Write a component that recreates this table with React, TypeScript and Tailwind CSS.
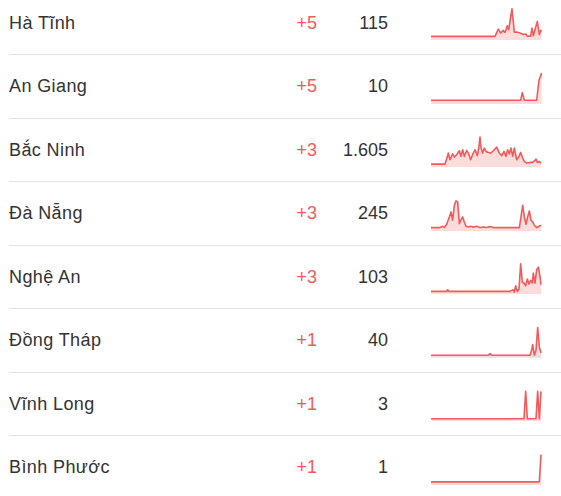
import React from "react";

type Raw = [number, number][];

const conv = (raw: Raw, ox: number, oy: number, top: number): [number, number][] =>
  raw.map(([X, Y]) => [X / 3 + ox - 431, Y / 3 + oy - top]);

const rowTop = (i: number) => -8.5 + 63.5 * i + 17.75;

const charts: [number, number][][] = [
  conv(
    [
      [33, 110], [225, 110], [235, 88], [242, 100], [250, 92], [255, 98], [262, 78], [266, 90],
      [276, 27], [283, 97], [290, 97], [300, 100], [310, 104], [318, 103], [322, 109], [332, 109],
      [336, 85], [340, 108], [345, 90], [352, 65], [358, 105], [362, 92], [365, 95],
    ],
    420, 0, rowTop(0)
  ),
  conv(
    [[453, 300], [722, 300], [727, 277], [733, 300], [770, 300], [777, 240], [785, 218]],
    280, 0, rowTop(1)
  ),
  conv(
    [
      [93, 133], [135, 133], [140, 118], [145, 100], [150, 120], [158, 102], [163, 112], [170, 105],
      [178, 93], [183, 110], [188, 90], [193, 110], [200, 92], [205, 100], [212, 120], [218, 104],
      [225, 90], [232, 108], [237, 80], [240, 52], [243, 85], [248, 100], [253, 85], [258, 95],
      [265, 98], [272, 100], [280, 93], [290, 82], [298, 100], [305, 108], [312, 95], [318, 110],
      [323, 90], [328, 103], [333, 85], [338, 110], [343, 85], [350, 120], [357, 110], [362, 98],
      [368, 115], [373, 125], [380, 130], [390, 128], [398, 128], [405, 122], [408, 118],
      [412, 128], [418, 125], [423, 130],
    ],
    400, 120, rowTop(2)
  ),
  conv(
    [
      [93, 322], [120, 322], [128, 318], [133, 322], [140, 312], [148, 290], [153, 275], [158, 300],
      [163, 255], [168, 242], [173, 245], [178, 310], [183, 298], [188, 290], [193, 305], [198, 318],
      [205, 320], [212, 318], [220, 321], [230, 318], [240, 322], [250, 320], [260, 322], [270, 319],
      [280, 322], [290, 322], [358, 322], [363, 290], [368, 255], [373, 290], [378, 312], [383, 290],
      [388, 272], [393, 300], [398, 305], [403, 315], [410, 322], [418, 318], [423, 315],
    ],
    400, 120, rowTop(3)
  ),
  conv(
    [
      [93, 125], [140, 125], [143, 120], [147, 125], [330, 125], [335, 122], [340, 120], [343, 127],
      [347, 108], [352, 125], [357, 118], [362, 42], [367, 98], [372, 100], [377, 108], [382, 88],
      [387, 103], [392, 92], [397, 100], [400, 70], [405, 100], [410, 60], [415, 52], [420, 80],
      [423, 105],
    ],
    400, 250, rowTop(4)
  ),
  conv(
    [
      [93, 315], [265, 315], [270, 310], [275, 315], [390, 315], [395, 300], [398, 283], [403, 315],
      [408, 300], [413, 232], [418, 290], [423, 308],
    ],
    400, 250, rowTop(5)
  ),
  conv(
    [[93, 147], [372, 147], [377, 65], [382, 147], [408, 147], [413, 65], [418, 147], [423, 65]],
    400, 370, rowTop(6)
  ),
  conv([[93, 335], [418, 335], [423, 253]], 400, 370, rowTop(7)),
];

const rows = [
  { name: "Hà Tĩnh", delta: "+5", total: "115" },
  { name: "An Giang", delta: "+5", total: "10" },
  { name: "Bắc Ninh", delta: "+3", total: "1.605" },
  { name: "Đà Nẵng", delta: "+3", total: "245" },
  { name: "Nghệ An", delta: "+3", total: "103" },
  { name: "Đồng Tháp", delta: "+1", total: "40" },
  { name: "Vĩnh Long", delta: "+1", total: "3" },
  { name: "Bình Phước", delta: "+1", total: "1" },
];

function Spark({ pts }: { pts: [number, number][] }) {
  const line = pts.map(([x, y], i) => `${i ? "L" : "M"}${x.toFixed(2)} ${y.toFixed(2)}`).join(" ");
  const first = pts[0];
  const last = pts[pts.length - 1];
  const area = `${line} L${last[0].toFixed(2)} 31 L${first[0].toFixed(2)} 31 Z`;
  return (
    <svg width="111" height="31" viewBox="0 0 111 31" className="block overflow-visible">
      <path d={area} fill="#fddcdc" stroke="none" />
      <path d={line} fill="none" stroke="#f25a5c" strokeWidth="1.6" strokeLinejoin="round" />
    </svg>
  );
}

export default function App() {
  return (
    <div className="w-[561px] h-[496px] overflow-hidden bg-white font-['Liberation_Sans',Arial,sans-serif] text-[18px] text-[#333]">
      <div className="-mt-[8.5px]">
        {rows.map((r, i) => (
          <div
            key={r.name}
            className="ml-[9px] h-[63.5px] box-border border-b border-[#e3e3e3] flex items-center pt-[4px]"
          >
            <div className="w-[250px] leading-[20px] mb-[4px] tracking-[0.4px] whitespace-nowrap">{r.name}</div>
            <div className="w-[58px] leading-[20px] mb-[4px] text-right text-[#f55a5a]">{r.delta}</div>
            <div className="w-[71px] leading-[20px] mb-[4px] text-right">{r.total}</div>
            <div className="w-[43px]" />
            <Spark pts={charts[i]} />
          </div>
        ))}
      </div>
    </div>
  );
}
